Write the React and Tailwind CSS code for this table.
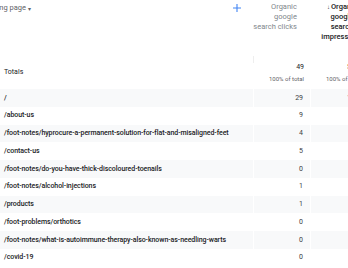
import React from "react";

const rows = [
  ["/", "29", "1,862"],
  ["/about-us", "9", "421"],
  ["/foot-notes/hyprocure-a-permanent-solution-for-flat-and-misaligned-feet", "4", "393"],
  ["/contact-us", "5", "212"],
  ["/foot-notes/do-you-have-thick-discoloured-toenails", "0", "187"],
  ["/foot-notes/alcohol-injections", "1", "164"],
  ["/products", "1", "98"],
  ["/foot-problems/orthotics", "0", "83"],
  ["/foot-notes/what-is-autoimmune-therapy-also-known-as-needling-warts", "0", "71"],
  ["/covid-19", "0", "52"],
];

export default function App() {
  return (
    <div className="w-[348px] h-[268px] overflow-hidden bg-white font-['Roboto',sans-serif]">
      <div className="w-[380px]">
        {/* header */}
        <div className="flex h-[46px]">
          <div className="w-[254px] flex justify-between pr-[6px] pt-[3px] overflow-hidden">
            <div className="flex items-center h-[10px] text-[7.5px] text-[#5f6368] ml-[-19px]">
              <span>Landing page</span>
              <span className="ml-[2px] text-[6px]">▾</span>
            </div>
            <svg width="10" height="10" viewBox="0 0 10 10">
              <path d="M5 1v8M1 5h8" stroke="#4285f4" strokeWidth="1.1" fill="none" />
            </svg>
          </div>
          <div className="w-[57px] pr-[7px] pt-[2px] text-right text-[7.5px] leading-[10px] text-[#80868b]">
            <div>Organic</div>
            <div>google</div>
            <div>search clicks</div>
          </div>
          <div className="w-[78px] pt-[2px] text-center text-[7.5px] leading-[10px] font-medium text-[#202124]">
            <div>
              <span className="text-[6px] mr-[1px]">↓</span>Organic
            </div>
            <div>google</div>
            <div>search</div>
            <div>impressions</div>
          </div>
        </div>
        {/* totals */}
        <div className="flex h-[43px]">
          <div className="w-[254px] pl-[4px] pt-[21px] text-[7px] leading-[10px] text-[#202124] relative">
            Totals
            <div className="absolute right-0 top-[10px] h-[7px] w-px bg-[#eeeeee]" />
          </div>
          <div className="w-[57px] pr-[7px] pt-[16px] text-right">
            <div className="text-[7px] leading-[10px] text-[#202124]">49</div>
            <div className="text-[6px] leading-[13px] text-[#5f6368]">100% of total</div>
          </div>
          <div className="w-[57px] pr-[4px] pt-[16px] text-right">
            <div className="text-[7px] leading-[10px] text-[#202124]">5,120</div>
            <div className="text-[6px] leading-[13px] text-[#5f6368] mr-[3px]">100% of total</div>
          </div>
        </div>
        {/* rows */}
        {rows.map(([label, val, imp], i) => {
          const bg = i % 2 === 0 ? "bg-[#f8f9fa]" : "bg-white";
          return (
            <div key={i} className="flex h-[17.75px] items-stretch">
              <div className={`w-[254px] ${bg} border-r border-white flex items-center pl-[4px] text-[7px] tracking-[-0.06px] font-medium text-[#202124] whitespace-nowrap`}>
                {label}
              </div>
              <div className={`w-[57px] ${bg} border-r border-white flex items-center justify-end pr-[7px] text-[7px] text-[#3c4043]`}>
                {val}
              </div>
              <div className={`w-[57px] ${bg} flex items-center justify-end pr-[4px] text-[7px] text-[#3c4043]`}>
                {imp}
              </div>
            </div>
          );
        })}
      </div>
    </div>
  );
}
